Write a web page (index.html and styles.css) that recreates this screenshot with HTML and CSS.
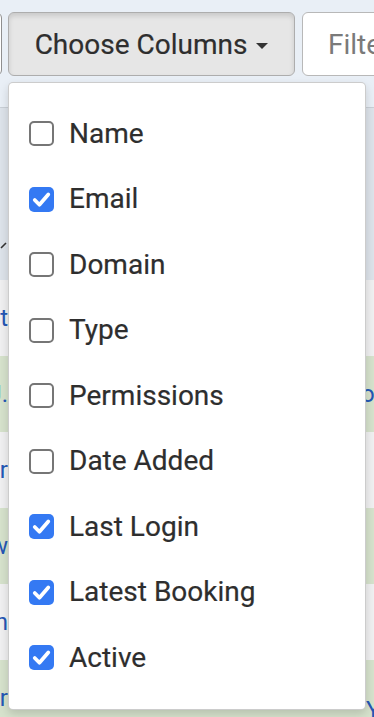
FILE: index.html
```html
<!DOCTYPE html>
<html>
<head>
<meta charset="utf-8">
<link rel="stylesheet" href="styles.css">
</head>
<body>
<div class="page">
  <div class="toolbar">
    <button class="btn btn-prev">Export</button>
    <button class="btn btn-active">Choose Columns <span class="caret"></span></button>
    <input class="filter" type="text" placeholder="Filter">
  </div>
  <div class="table">
    <div class="thead">
      <div class="cell-l"><svg class="sort" width="8" height="10" viewBox="0 0 8 10"><path d="M1 8 L6 3" stroke="#333" stroke-width="1.6" fill="none"/></svg></div>
    </div>
    <div class="row odd"><div class="cell-l">Scott</div></div>
    <div class="row even"><div class="cell-l">J.</div><div class="cell-r r2">or</div></div>
    <div class="row odd"><div class="cell-l">Parker</div></div>
    <div class="row even"><div class="cell-l">Andrew</div></div>
    <div class="row odd"><div class="cell-l">Brown</div></div>
    <div class="row even"><div class="cell-l">Cooper</div><div class="cell-r r6">Yes</div></div>
  </div>

  <ul class="menu">
    <li class="item"><span class="cb"></span><span class="label">Name</span></li>
    <li class="item"><span class="cb on"><svg viewBox="0 0 24 24" width="25" height="25"><path d="M5.5 12.5 L10 17 L18.5 7.2" stroke="#fff" stroke-width="3.6" fill="none" stroke-linecap="round" stroke-linejoin="round"/></svg></span><span class="label">Email</span></li>
    <li class="item"><span class="cb"></span><span class="label">Domain</span></li>
    <li class="item"><span class="cb"></span><span class="label">Type</span></li>
    <li class="item"><span class="cb"></span><span class="label">Permissions</span></li>
    <li class="item"><span class="cb"></span><span class="label">Date Added</span></li>
    <li class="item"><span class="cb on"><svg viewBox="0 0 24 24" width="25" height="25"><path d="M5.5 12.5 L10 17 L18.5 7.2" stroke="#fff" stroke-width="3.6" fill="none" stroke-linecap="round" stroke-linejoin="round"/></svg></span><span class="label">Last Login</span></li>
    <li class="item"><span class="cb on"><svg viewBox="0 0 24 24" width="25" height="25"><path d="M5.5 12.5 L10 17 L18.5 7.2" stroke="#fff" stroke-width="3.6" fill="none" stroke-linecap="round" stroke-linejoin="round"/></svg></span><span class="label">Latest Booking</span></li>
    <li class="item"><span class="cb on"><svg viewBox="0 0 24 24" width="25" height="25"><path d="M5.5 12.5 L10 17 L18.5 7.2" stroke="#fff" stroke-width="3.6" fill="none" stroke-linecap="round" stroke-linejoin="round"/></svg></span><span class="label">Active</span></li>
  </ul>
</div>
</body>
</html>
```

FILE: styles.css
```css
html, body {
  margin: 0;
  padding: 0;
}
body {
  background: #e9eff6;
  font-family: Roboto, "Liberation Sans", sans-serif;
  overflow: hidden;
  width: 374px;
  height: 717px;
}
.page {
  position: relative;
  width: 374px;
  height: 717px;
  overflow: hidden;
}
.toolbar {
  display: flex;
  gap: 6px;
  padding-top: 12px;
  height: 64px;
}
.btn {
  font-family: inherit;
  font-size: 28px;
  color: #2e2e2e;
  height: 64px;
  border-radius: 6px;
  border: 1px solid #adadad;
  background: #fff;
  flex: none;
  display: flex;
  align-items: center;
  justify-content: center;
  padding: 0;
  -webkit-text-stroke: 0.2px #2e2e2e;
}
.btn-prev {
  width: 60px;
  margin-left: -58px;
  color: transparent;
  -webkit-text-stroke: 0;
  border-color: #8f8f8f;
}
.btn-active {
  width: 287px;
  background: #e6e6e6;
  box-shadow: inset 0 3px 5px rgba(0,0,0,.125);
  padding-left: 0;
}
.caret {
  display: inline-block;
  width: 0;
  height: 0;
  margin-left: 9px;
  margin-top: 3px;
  border-top: 6px solid #333;
  border-left: 6.5px solid transparent;
  border-right: 6.5px solid transparent;
}
.filter {
  margin-left: 1px;
  flex: none;
  width: 140px;
  height: 64px;
  box-sizing: border-box;
  border: 1px solid #b8b8b8;
  border-radius: 6px;
  background: #fff;
  font-family: inherit;
  font-size: 28px;
  padding: 0 0 0 25px;
  color: #555;
}
.filter::placeholder {
  color: #7a7a7a;
}
.table {
  margin-top: 31px;
  border-top: 1px solid #c9cfd6;
}
.thead {
  height: 172px;
  background: #dde3ea;
  display: flex;
  align-items: flex-end;
}
.thead .cell-l {
  padding-bottom: 30px;
}
.row {
  height: 76px;
  display: flex;
  align-items: center;
  font-size: 24px;
  color: #2457b5;
  position: relative;
}
.odd {
  background: #f0f0f1;
}
.even {
  background: #d6e2cc;
}
.cell-l {
  width: 8px;
  flex: none;
  overflow: hidden;
  display: flex;
  justify-content: flex-end;
  white-space: nowrap;
}
.cell-r {
  position: absolute;
  white-space: nowrap;
}
.r2 {
  left: 361px;
}
.r6 {
  left: 366px;
  top: 36px;
}
.menu {
  position: absolute;
  left: 8px;
  top: 82px;
  width: 358px;
  height: 628px;
  box-sizing: border-box;
  margin: 0;
  padding: 18px 0 0 0;
  list-style: none;
  background: #fff;
  border: 1px solid rgba(0,0,0,.2);
  border-radius: 5px;
  box-shadow: 0 4px 10px rgba(0,0,0,.15);
}
.item {
  height: 65.5px;
  display: flex;
  align-items: center;
  padding-left: 20px;
  font-size: 28px;
  color: #2e2e2e;
}
.label {
  line-height: 1;
  -webkit-text-stroke: 0.2px #2e2e2e;
}
.cb {
  width: 25px;
  height: 25px;
  box-sizing: border-box;
  border: 2px solid #767676;
  border-radius: 5px;
  background: #fff;
  margin-right: 15px;
  flex: none;
  display: flex;
  align-items: center;
  justify-content: center;
}
.cb.on {
  background: #3479f3;
  border: none;
}
.cb svg {
  display: block;
}
```
